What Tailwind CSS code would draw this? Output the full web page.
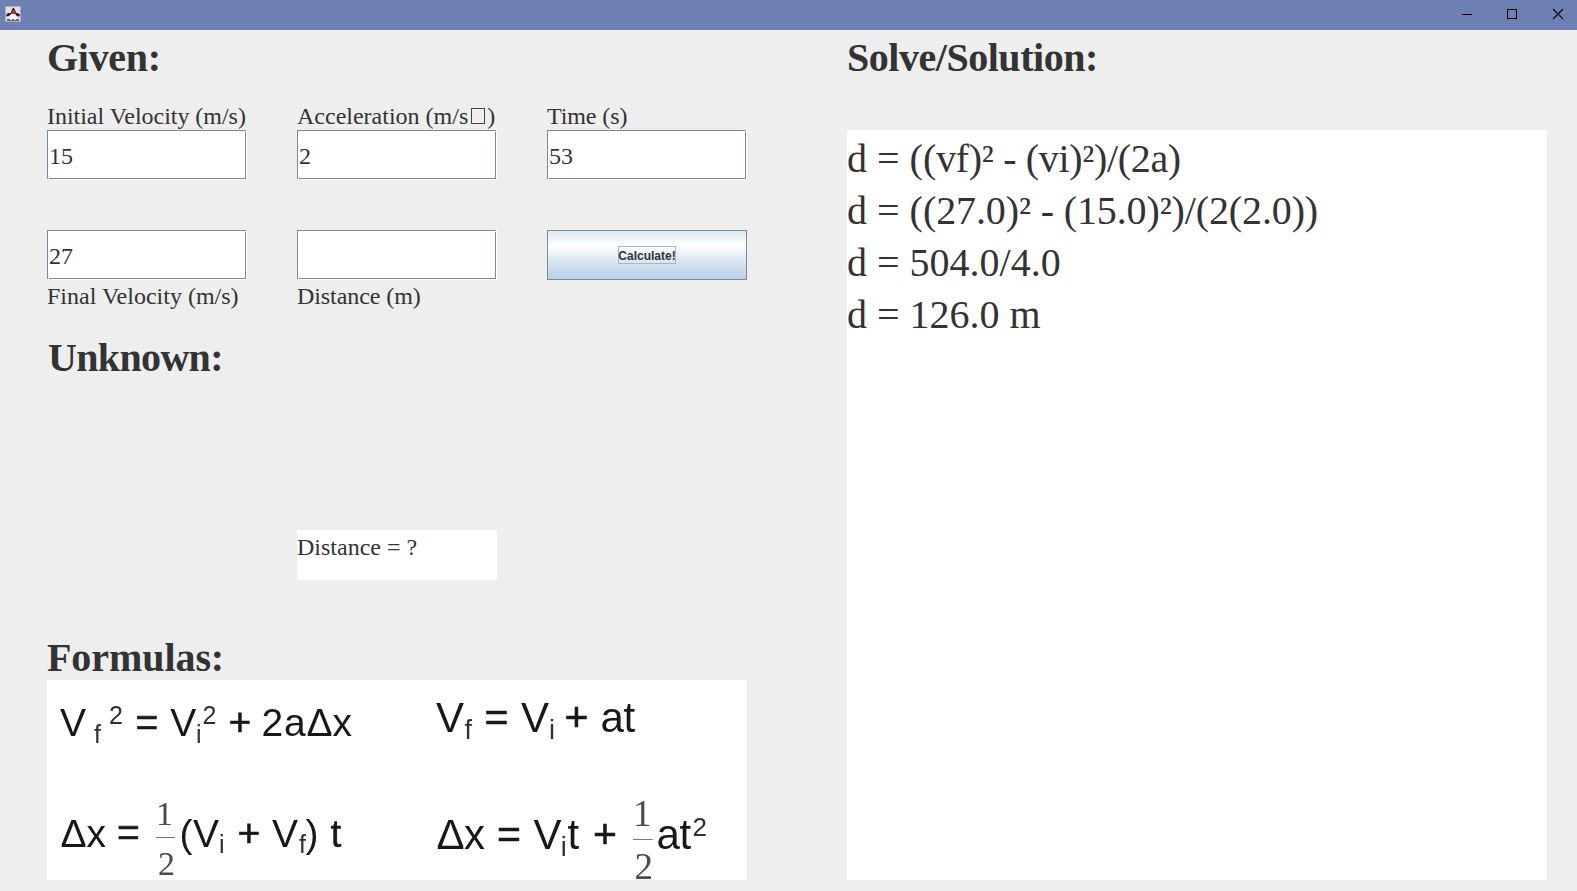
<!DOCTYPE html>
<html lang="en">
<head>
<meta charset="utf-8">
<title>Kinematics Calculator</title>
<script src="https://cdn.jsdelivr.net/npm/@tailwindcss/browser@4"></script>
</head>
<body class="h-[891px] w-[1577px] overflow-hidden bg-[#eeeeee] font-['Liberation_Serif',serif] text-[#333333]">
<header class="flex h-[30px] items-center justify-between bg-[#6d7fb3] pl-[5px] text-black">
  <svg class="mb-[2px] size-4" viewBox="0 0 16 16">
    <rect width="16" height="16" rx="1" fill="#a9afb8"/>
    <rect x="1" y="1" width="14" height="14" fill="#dfe1e4"/>
    <path d="M8.300 1.500C7 3 6.300 5 6 7L3 7 1 9 1.500 10.500 4 10 5 9 11 9 12 10.300 14.500 10.500 15 8.500 12.500 7 10.800 7C10.300 4 9.500 2.500 8.300 1.500Z" fill="#22252a"/>
    <path d="M5.800 8Q8 7 10.500 8L11.800 13H4.300Z" fill="#f8f8f8"/>
    <circle cx="8.800" cy="5.700" r="2" fill="#d3202b"/>
    <path d="M2 13.200H14V14.800H2Z" fill="#4a5058"/>
    <path d="M5 13.500H7M9 13.500H11" stroke="#ddd"/>
  </svg>
  <div class="flex h-full">
    <svg class="h-[30px] w-[46px]" viewBox="0 0 46 30"><path d="M18 14.500H28" stroke="currentColor"/></svg>
    <svg class="h-[30px] w-[46px]" viewBox="0 0 46 30"><rect x="17.500" y="9.500" width="9" height="9" fill="none" stroke="currentColor"/></svg>
    <svg class="h-[30px] w-[41px]" viewBox="0 0 41 30"><path d="M17 9L27 19M27 9L17 19" stroke="currentColor" stroke-width="1.100"/></svg>
  </div>
</header>
<main class="flex gap-[100px] pl-[47px]">
  <section class="flex w-[700px] flex-col">
    <h1 class="mt-[3px] h-[67px] text-[40px] leading-[50px] font-bold tracking-[-0.3px] whitespace-nowrap">Given:</h1>
    <div class="grid grid-cols-[200px_200px_200px] gap-x-[50px] gap-y-[50px] text-[24px]">
      <div>
        <div class="h-[30px] pt-px leading-[30px] tracking-[-0.03px] whitespace-nowrap">Initial Velocity (m/s)</div>
        <div class="relative h-[50px] border-r border-b border-white bg-white">
          <div class="h-[49px] border border-[#7a8a99] pt-[10px] pl-[1px] leading-[30px]">15</div>
          <i class="absolute bottom-0 left-px size-px bg-[#eeeeee]"></i><i class="absolute top-px right-0 size-px bg-[#eeeeee]"></i>
        </div>
      </div>
      <div>
        <div class="h-[30px] pt-px leading-[30px] whitespace-nowrap">Acceleration (m/s<span class="mr-[2px] ml-[3px] inline-block h-[16px] w-[14px] border border-[#444]"></span>)</div>
        <div class="relative h-[50px] border-r border-b border-white bg-white">
          <div class="h-[49px] border border-[#7a8a99] pt-[10px] pl-[1px] leading-[30px]">2</div>
          <i class="absolute bottom-0 left-px size-px bg-[#eeeeee]"></i><i class="absolute top-px right-0 size-px bg-[#eeeeee]"></i>
        </div>
      </div>
      <div>
        <div class="h-[30px] pt-px leading-[30px] tracking-[-0.1px] whitespace-nowrap">Time (s)</div>
        <div class="relative h-[50px] border-r border-b border-white bg-white">
          <div class="h-[49px] border border-[#7a8a99] pt-[10px] pl-[1px] leading-[30px]">53</div>
          <i class="absolute bottom-0 left-px size-px bg-[#eeeeee]"></i><i class="absolute top-px right-0 size-px bg-[#eeeeee]"></i>
        </div>
      </div>
      <div>
        <div class="relative h-[50px] border-r border-b border-white bg-white">
          <div class="h-[49px] border border-[#7a8a99] pt-[10px] pl-[1px] leading-[30px]">27</div>
          <i class="absolute bottom-0 left-px size-px bg-[#eeeeee]"></i><i class="absolute top-px right-0 size-px bg-[#eeeeee]"></i>
        </div>
        <div class="h-[30px] pt-px leading-[30px] whitespace-nowrap">Final Velocity (m/s)</div>
      </div>
      <div>
        <div class="relative h-[50px] border-r border-b border-white bg-white">
          <div class="h-[49px] border border-[#7a8a99]"></div>
          <i class="absolute bottom-0 left-px size-px bg-[#eeeeee]"></i><i class="absolute top-px right-0 size-px bg-[#eeeeee]"></i>
        </div>
        <div class="h-[30px] pt-px leading-[30px] tracking-[-0.08px] whitespace-nowrap">Distance (m)</div>
      </div>
      <button class="flex h-[50px] items-center justify-center border border-[#7a8a99] bg-[linear-gradient(#dde8f3_0%,#ffffff_30%,#dde8f3_60%,#b8cfe5_100%)] font-['Liberation_Sans',sans-serif] text-[12px] font-bold">
        <span class="flex h-[18px] w-[58px] items-center justify-center border border-[#a3b8cc] pt-[2px] leading-4">Calculate!</span>
      </button>
    </div>
    <h1 class="mt-[23px] h-[197px] pl-px text-[40px] leading-[50px] font-bold tracking-[-0.65px]">Unknown:</h1>
    <div class="ml-[250px] h-[50px] w-[200px] bg-white pt-[2px] text-[24px] leading-[30px]">Distance = ?</div>
    <h1 class="mt-[53px] h-[47px] text-[40px] leading-[50px] font-bold tracking-[-0.07px]">Formulas:</h1>
    <svg class="h-[200px] w-[700px] overflow-visible bg-white font-['Liberation_Sans',sans-serif]" viewBox="0 0 700 200">
      <g class="blur-[0.5px]" fill="#181818">
        <g font-size="39">
          <text x="13" y="56">V</text><text x="88.500" y="55.500" stroke="#181818" stroke-width=".6">=</text><text x="123.200" y="56">V</text><text x="181.500" y="55" stroke="#181818" stroke-width=".6">+</text>
          <text x="214.500" y="56">2</text><text x="237" y="56">a</text><text x="259.500" y="56">Δ</text><text x="285.500" y="56">x</text>
          <text x="13.500" y="166.700">Δ</text><text x="39.500" y="166.700">x</text><text x="70" y="165.500" stroke="#181818" stroke-width=".6">=</text><text x="132.500" y="166.700">(</text>
          <text x="146" y="166.700">V</text><text x="190.500" y="165.500" stroke="#181818" stroke-width=".6">+</text><text x="225" y="166.700">V</text><text x="258.500" y="166.700">)</text><text x="283.500" y="166.700" stroke="#181818" stroke-width=".4">t</text>
        </g>
        <g font-size="25" fill="#303030">
          <text x="47" y="62.700">f</text><text x="62" y="43.500">2</text><text x="149" y="62.700">i</text><text x="155.500" y="43.500">2</text>
          <text x="172" y="172.500">i</text><text x="252" y="172.500">f</text>
          <text x="417.500" y="58.500" font-size="27">f</text><text x="502" y="58.500" font-size="27">i</text>
          <text x="513.800" y="175.700" font-size="27">i</text><text x="645.500" y="155.700" font-size="26">2</text>
        </g>
        <g font-size="42">
          <text x="389" y="51.700">V</text><text x="437.500" y="50.500" font-size="41" stroke="#181818" stroke-width=".6">=</text><text x="474" y="51.700">V</text><text x="517.500" y="51" font-size="41" stroke="#181818" stroke-width=".6">+</text><text x="553.500" y="51.700">a</text><text x="576.500" y="51.700">t</text>
          <text x="389.500" y="169">Δ</text><text x="417" y="169">x</text><text x="450" y="167.500" font-size="41" stroke="#181818" stroke-width=".6">=</text><text x="486.500" y="169">V</text><text x="520.500" y="169">t</text><text x="546" y="168" font-size="41" stroke="#181818" stroke-width=".6">+</text><text x="609.500" y="169">a</text><text x="632.500" y="169">t</text>
        </g>
        <g class="font-['Liberation_Serif',serif]" font-size="34" fill="#4a4a4a">
          <text x="109" y="144.500">1</text><text x="111" y="194.500">2</text>
          <text x="586" y="145.700" font-size="37">1</text><text x="587.500" y="198.700" font-size="37">2</text>
        </g>
        <path d="M109 157.500H128M586 159.500H605.700" stroke="#777"/>
      </g>
    </svg>
  </section>
  <section class="flex w-[700px] flex-col">
    <h1 class="mt-[3px] h-[97px] text-[40px] leading-[50px] font-bold tracking-[-0.47px] whitespace-nowrap">Solve/Solution:</h1>
    <div class="h-[750px] bg-white pt-[3px] text-[40px] leading-[52px] whitespace-nowrap">
      <p>d = ((<span class="tracking-[-0.33px]">vf)² - (vi)²)/(2a)</span></p>
      <p>d = ((<span class="tracking-[-0.12px]">27.0)² - (15.0)²)/(2(2.0))</span></p>
      <p>d = 504.0/4.0</p>
      <p>d = 126.0 m</p>
    </div>
  </section>
</main>
</body>
</html>
